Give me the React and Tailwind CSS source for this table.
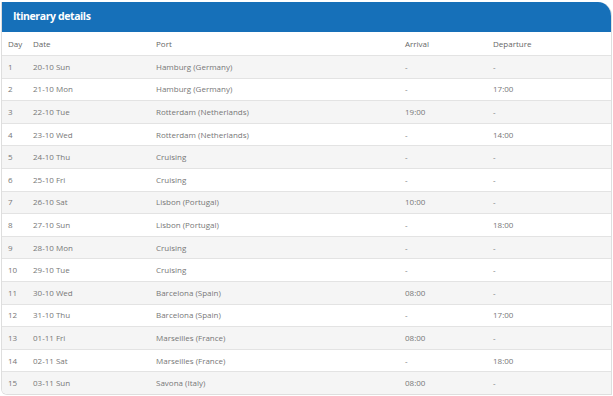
const rows = [
  ['1', '20-10 Sun', 'Hamburg (Germany)', '-', '-'],
  ['2', '21-10 Mon', 'Hamburg (Germany)', '-', '17:00'],
  ['3', '22-10 Tue', 'Rotterdam (Netherlands)', '19:00', '-'],
  ['4', '23-10 Wed', 'Rotterdam (Netherlands)', '-', '14:00'],
  ['5', '24-10 Thu', 'Cruising', '-', '-'],
  ['6', '25-10 Fri', 'Cruising', '-', '-'],
  ['7', '26-10 Sat', 'Lisbon (Portugal)', '10:00', '-'],
  ['8', '27-10 Sun', 'Lisbon (Portugal)', '-', '18:00'],
  ['9', '28-10 Mon', 'Cruising', '-', '-'],
  ['10', '29-10 Tue', 'Cruising', '-', '-'],
  ['11', '30-10 Wed', 'Barcelona (Spain)', '08:00', '-'],
  ['12', '31-10 Thu', 'Barcelona (Spain)', '-', '17:00'],
  ['13', '01-11 Fri', 'Marseilles (France)', '08:00', '-'],
  ['14', '02-11 Sat', 'Marseilles (France)', '-', '18:00'],
  ['15', '03-11 Sun', 'Savona (Italy)', '08:00', '-'],
]

const cols = 'grid grid-cols-[25px_123px_249px_88px_1fr] items-center pl-[6px]'

export default function App() {
  return (
    <div className="w-[613px] h-[396px] bg-white pt-[2px] font-['Open_Sans',sans-serif]">
      <div className="w-[611px] ml-[1px] border-x border-b border-[#dedede] rounded-tr-[14px] rounded-bl-[6px] overflow-hidden">
        <div className="h-[30px] bg-[#1670b9] flex items-center pl-[11px]">
          <h2 className="text-white font-bold text-[10.5px] tracking-[-0.4px]">Itinerary details</h2>
        </div>
        <div className={`${cols} h-[23px] text-[8px] text-[#666]`}>
          <span>Day</span>
          <span>Date</span>
          <span>Port</span>
          <span>Arrival</span>
          <span>Departure</span>
        </div>
        {rows.map((r, i) => (
          <div
            key={i}
            className={`${cols} h-[22.6px] border-t border-[#e3e3e3] text-[8px] text-[#777] ${i % 2 === 0 ? 'bg-[#f5f5f5]' : 'bg-white'}`}
          >
            {r.map((c, j) => (
              <span key={j}>{c}</span>
            ))}
          </div>
        ))}
      </div>
    </div>
  )
}
